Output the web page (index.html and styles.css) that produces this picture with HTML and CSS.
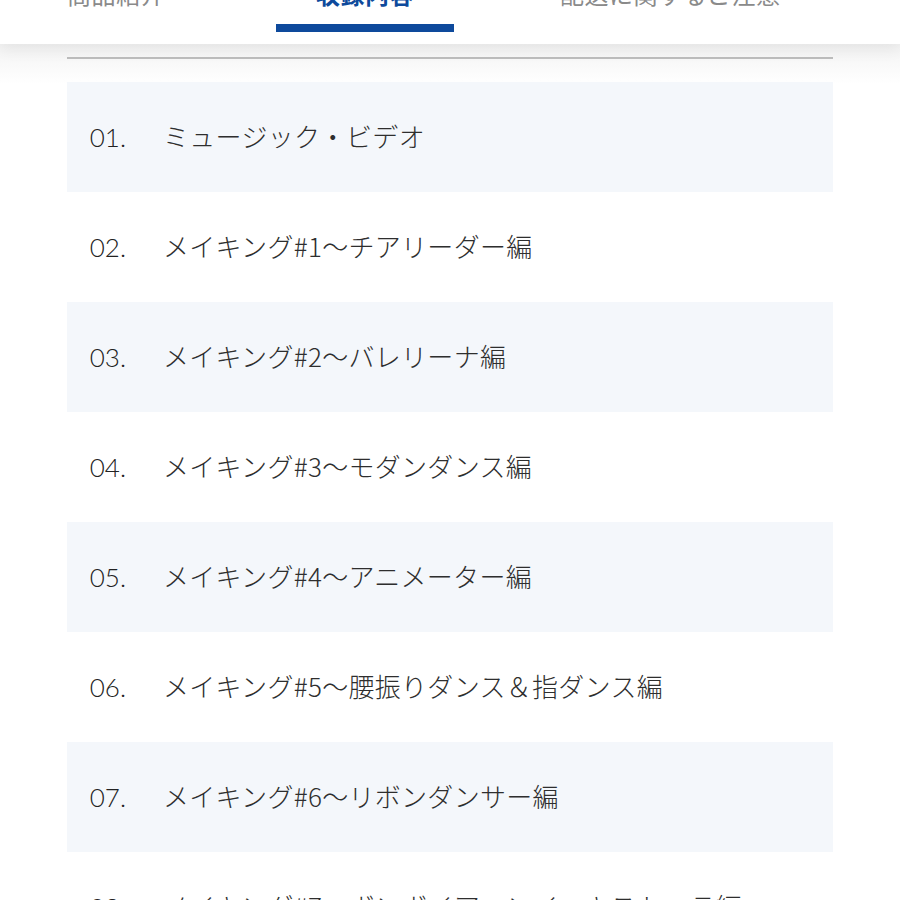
FILE: index.html
```html
<!DOCTYPE html>
<html lang="ja">
<head>
  <meta charset="UTF-8">
  <title>収録内容</title>
  <link rel="stylesheet" href="styles.css">
</head>
<body>
  <nav class="tabs">
    <div class="tab tab-info">商品紹介</div>
    <div class="tab tab-contents active">収録内容</div>
    <div class="tab tab-shipping">配送に関するご注意</div>
  </nav>

  <main class="contents">
    <hr class="rule">
    <ol class="track-list">
      <li class="track"><span class="num">01.</span><span class="title">ミュージック・ビデオ</span></li>
      <li class="track"><span class="num">02.</span><span class="title">メイキング#1～チアリーダー編</span></li>
      <li class="track"><span class="num">03.</span><span class="title">メイキング#2～バレリーナ編</span></li>
      <li class="track"><span class="num">04.</span><span class="title">メイキング#3～モダンダンス編</span></li>
      <li class="track"><span class="num">05.</span><span class="title">メイキング#4～アニメーター編</span></li>
      <li class="track"><span class="num">06.</span><span class="title">メイキング#5～腰振りダンス＆指ダンス編</span></li>
      <li class="track"><span class="num">07.</span><span class="title">メイキング#6～リボンダンサー編</span></li>
      <li class="track"><span class="num">08.</span><span class="title">メイキング#7～ボンボイア～ンイニキスト～ラ編</span></li>
    </ol>
  </main>
</body>
</html>
```

FILE: styles.css
```css
body {
  margin: 0;
  font-family: "Liberation Sans", "Noto Sans CJK JP", sans-serif;
  background: #fff;
  color: #333;
  overflow: hidden;
}

/* tab bar (scrolled so the labels sit just above the top edge) */
.tabs {
  position: relative;
  z-index: 2;
  display: flex;
  align-items: flex-start;
  height: 76px;
  margin-top: -32px;
  padding-left: 67px;
  background: #fff;
  box-shadow: 0 6px 14px rgba(0,0,0,0.06);
  box-sizing: border-box;
}
.tab {
  font-family: "Noto Sans CJK JP", sans-serif;
  font-size: 24px;
  line-height: 32px;
  padding-top: 10px;
  color: #8a8a8a;
  letter-spacing: 0.5px;
}
.tab-contents {
  width: 178px;
  margin-left: 111px;
  text-align: center;
  color: #0e4a9c;
  font-weight: bold;
}
.tab-contents::after {
  content: "";
  display: block;
  height: 8px;
  margin-top: 14px;
  background: #0e4a9c;
}
.tab-shipping {
  margin-left: 106px;
}

.contents {
  padding: 0 67px;
  background: linear-gradient(#f3f3f3, #fff 40px);
}
.rule {
  margin: 0;
  padding-top: 13px;
  border: none;
  border-bottom: 2px solid #bdbdbd;
}

.track-list {
  list-style: none;
  margin: 23px 0 0;
  padding: 0;
}
.track {
  height: 110px;
  line-height: 108px;
  font-size: 26px;
  white-space: nowrap;
}
.track:nth-child(odd) {
  background: #f4f7fb;
}
.num {
  display: inline-block;
  width: 59px;
  text-align: right;
  font-family: Lato, "Liberation Sans", sans-serif;
  font-weight: 300;
  color: #222;
}
.title {
  margin-left: 37px;
  font-family: "Noto Sans CJK JP", sans-serif;
  font-weight: 300;
  letter-spacing: 0.3px;
  color: #2e2e2e;
}
```
